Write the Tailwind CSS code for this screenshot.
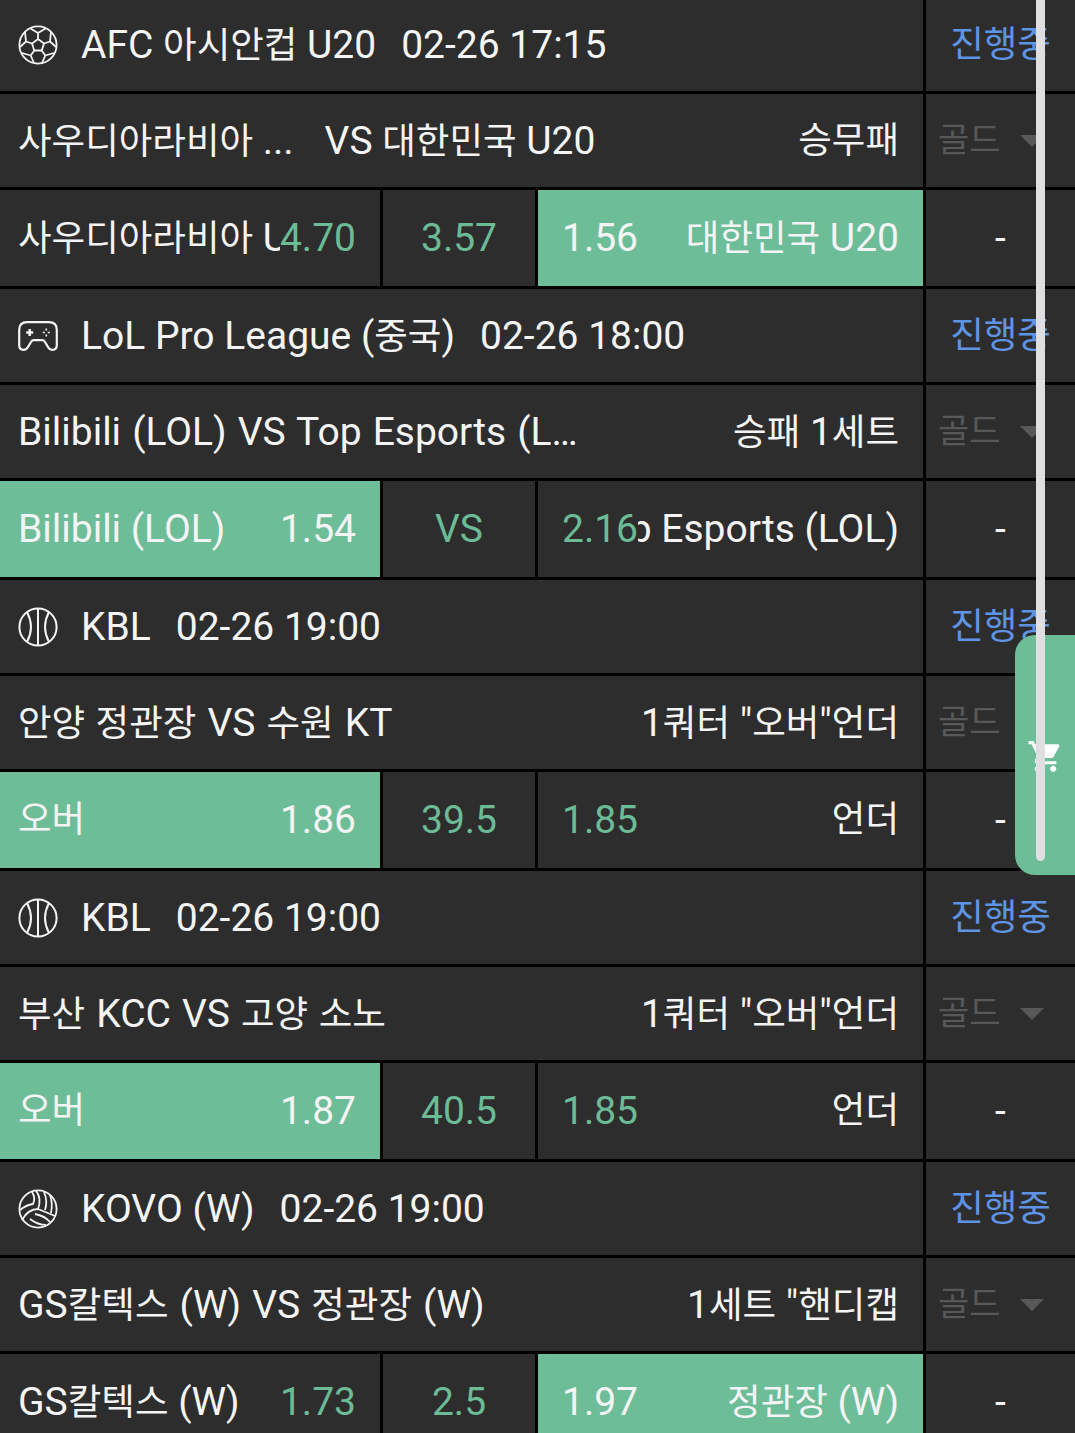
<!DOCTYPE html>
<html lang="ko">
<head>
    <meta charset="UTF-8">
    <meta name="viewport" content="width=device-width, initial-scale=1.0">
    <title>Bet list</title>
    <script src="https://cdn.jsdelivr.net/npm/@tailwindcss/browser@4"></script>
</head>
<body class="relative h-[1433px] overflow-hidden bg-[#2d2d2d] font-['Roboto','Noto_Sans_CJK_KR',sans-serif] text-[39px] text-[#f4f4f4] whitespace-nowrap">
    <div class="-mt-[2px]">

        <!-- AFC -->
        <div class="flex h-[96px] border-b-[3px] border-black">
            <div class="flex w-[926px] items-center border-r-[3px] border-black pl-[18px] pt-[1px]">
                <svg class="w-[40px] h-[40px] mr-[23px] shrink-0" viewBox="0 0 40 40" fill="none" stroke="#f4f4f4" stroke-width="1.8"><circle cx="20" cy="20" r="18.6"/><path d="M20 14l6 4.500-2.300 7h-7.400l-2.300-7zM20 14V8M26 18.500l6-2M23.700 25.500l3.600 5M16.300 25.500l-3.600 5M14 18.500l-6-2M20 8l-7.500-4.500M20 8l7.500-4.500M32 16.500l1-9.500M32 16.500l6 5.500M27.300 30.500l8.700-2.500M27.300 30.500L24 38M12.700 30.500L4 28M12.700 30.500L16 38M8 16.500L7 7M8 16.500L2 22"/></svg>
                <span>AFC <span class="text-[36.5px]">아시안컵</span> U20</span>
                <span class="ml-[25px]">02-26 17:15</span>
            </div>
            <div class="flex flex-1 items-center justify-center pt-[1px] text-[36.5px] text-[#5f93e3]">진행중</div>
        </div>
        <div class="flex h-[96px] border-b-[3px] border-black">
            <div class="flex w-[926px] items-center justify-between border-r-[3px] border-black pl-[18px] pr-[24px] pt-[1px]">
                <span><span class="text-[36.5px]">사우디아라비아</span> ...<span class="ml-[31px]">VS <span class="text-[36.5px]">대한민국</span> U20</span></span>
                <span class="text-[36.5px]">승무패</span>
            </div>
            <div class="flex flex-1 items-center pl-[12px] text-[34px] text-[#585858]">골드<span class="ml-[19px] border-x-[12px] border-t-[12px] border-x-transparent border-t-[#585858]"></span></div>
        </div>
        <div class="flex h-[99px] border-b-[3px] border-black">
            <div class="flex w-[926px] border-r-[3px] border-black">
                <div class="flex w-[383px] shrink-0 items-center border-r-[3px] border-black pl-[18px] pr-[24px]">
                    <div class="flex-1 min-w-0 overflow-hidden"><span class="text-[36.5px]">사우디아라비아</span> U20</div>
                    <span class="shrink-0 text-[#6cbb97]">4.70</span>
                </div>
                <div class="flex w-[155px] shrink-0 items-center justify-center border-r-[3px] border-black text-[#6cbb97]">3.57</div>
                <div class="flex flex-1 min-w-0 items-center bg-[#6cbd98] pl-[24px] pr-[24px]">
                    <span class="shrink-0">1.56</span>
                    <div class="flex flex-1 min-w-0 justify-end overflow-hidden"><span class="shrink-0"><span class="text-[36.5px]">대한민국</span> U20</span></div>
                </div>
            </div>
            <div class="flex flex-1 items-center justify-center">-</div>
        </div>

        <!-- LoL -->
        <div class="flex h-[96px] border-b-[3px] border-black">
            <div class="flex w-[926px] items-center border-r-[3px] border-black pl-[18px] pt-[1px]">
                <svg class="w-[40px] h-[30px] mr-[23px] shrink-0" viewBox="0 0 40 30" fill="none" stroke="#f4f4f4" stroke-width="2.2"><path d="M9 1.200H31Q38.800 1.200 38.800 9V24Q38.800 28.800 34.500 28.800Q31.500 28.800 30 26L27 21Q26 19.200 24 19.200H16Q14 19.200 13 21L10 26Q8.500 28.800 5.500 28.800Q1.200 28.800 1.200 24V9Q1.200 1.200 9 1.200Z"/><path stroke-width="2.500" d="M11.700 8v7M8.200 11.500h7"/><path stroke-width="1.600" d="M28.300 7.500v2M28.300 13.500v2M24.800 11.500h2M29.800 11.500h2"/></svg>
                <span>LoL Pro League (<span class="text-[36.5px]">중국</span>)</span>
                <span class="ml-[25px]">02-26 18:00</span>
            </div>
            <div class="flex flex-1 items-center justify-center pt-[1px] text-[36.5px] text-[#5f93e3]">진행중</div>
        </div>
        <div class="flex h-[96px] border-b-[3px] border-black">
            <div class="flex w-[926px] items-center justify-between border-r-[3px] border-black pl-[18px] pr-[24px] pt-[1px]">
                <span class="[word-spacing:1.4px]">Bilibili (LOL) VS Top Esports (L…</span>
                <span><span class="text-[36.5px]">승패</span> 1<span class="text-[36.5px]">세트</span></span>
            </div>
            <div class="flex flex-1 items-center pl-[12px] text-[34px] text-[#585858]">골드<span class="ml-[19px] border-x-[12px] border-t-[12px] border-x-transparent border-t-[#585858]"></span></div>
        </div>
        <div class="flex h-[99px] border-b-[3px] border-black">
            <div class="flex w-[926px] border-r-[3px] border-black">
                <div class="flex w-[383px] shrink-0 items-center border-r-[3px] border-black bg-[#6cbd98] pl-[18px] pr-[24px]">
                    <div class="flex-1 min-w-0 overflow-hidden">Bilibili (LOL)</div>
                    <span class="shrink-0">1.54</span>
                </div>
                <div class="flex w-[155px] shrink-0 items-center justify-center border-r-[3px] border-black text-[#6cbb97]">VS</div>
                <div class="flex flex-1 min-w-0 items-center pl-[24px] pr-[24px]">
                    <span class="shrink-0 text-[#6cbb97]">2.16</span>
                    <div class="flex flex-1 min-w-0 justify-end overflow-hidden"><span class="shrink-0">Top Esports (LOL)</span></div>
                </div>
            </div>
            <div class="flex flex-1 items-center justify-center">-</div>
        </div>

        <!-- KBL 1 -->
        <div class="flex h-[96px] border-b-[3px] border-black">
            <div class="flex w-[926px] items-center border-r-[3px] border-black pl-[18px] pt-[1px]">
                <svg class="w-[40px] h-[40px] mr-[23px] shrink-0" viewBox="0 0 40 40" fill="none" stroke="#f4f4f4" stroke-width="2"><circle cx="20" cy="20" r="18.600"/><path d="M20 1.500v37M9 5Q17 20 9 35M31 5Q23 20 31 35"/></svg>
                <span>KBL</span>
                <span class="ml-[25px]">02-26 19:00</span>
            </div>
            <div class="flex flex-1 items-center justify-center pt-[1px] text-[36.5px] text-[#5f93e3]">진행중</div>
        </div>
        <div class="flex h-[96px] border-b-[3px] border-black">
            <div class="flex w-[926px] items-center justify-between border-r-[3px] border-black pl-[18px] pr-[24px] pt-[1px]">
                <span class="[word-spacing:1.4px]"><span class="text-[36.5px]">안양 정관장</span> VS <span class="text-[36.5px]">수원</span> KT</span>
                <span>1<span class="text-[36.5px]">쿼터</span> "<span class="text-[36.5px]">오버</span>"<span class="text-[36.5px]">언더</span></span>
            </div>
            <div class="flex flex-1 items-center pl-[12px] text-[34px] text-[#585858]">골드<span class="ml-[19px] border-x-[12px] border-t-[12px] border-x-transparent border-t-[#585858]"></span></div>
        </div>
        <div class="flex h-[99px] border-b-[3px] border-black">
            <div class="flex w-[926px] border-r-[3px] border-black">
                <div class="flex w-[383px] shrink-0 items-center border-r-[3px] border-black bg-[#6cbd98] pl-[18px] pr-[24px]">
                    <div class="flex-1 min-w-0 overflow-hidden pt-[1px] text-[36.5px]">오버</div>
                    <span class="shrink-0">1.86</span>
                </div>
                <div class="flex w-[155px] shrink-0 items-center justify-center border-r-[3px] border-black text-[#6cbb97]">39.5</div>
                <div class="flex flex-1 min-w-0 items-center pl-[24px] pr-[24px]">
                    <span class="shrink-0 text-[#6cbb97]">1.85</span>
                    <div class="flex flex-1 min-w-0 justify-end overflow-hidden pt-[1px] text-[36.5px]">언더</div>
                </div>
            </div>
            <div class="flex flex-1 items-center justify-center">-</div>
        </div>

        <!-- KBL 2 -->
        <div class="flex h-[96px] border-b-[3px] border-black">
            <div class="flex w-[926px] items-center border-r-[3px] border-black pl-[18px] pt-[1px]">
                <svg class="w-[40px] h-[40px] mr-[23px] shrink-0" viewBox="0 0 40 40" fill="none" stroke="#f4f4f4" stroke-width="2"><circle cx="20" cy="20" r="18.600"/><path d="M20 1.500v37M9 5Q17 20 9 35M31 5Q23 20 31 35"/></svg>
                <span>KBL</span>
                <span class="ml-[25px]">02-26 19:00</span>
            </div>
            <div class="flex flex-1 items-center justify-center pt-[1px] text-[36.5px] text-[#5f93e3]">진행중</div>
        </div>
        <div class="flex h-[96px] border-b-[3px] border-black">
            <div class="flex w-[926px] items-center justify-between border-r-[3px] border-black pl-[18px] pr-[24px] pt-[1px]">
                <span class="[word-spacing:1.4px]"><span class="text-[36.5px]">부산</span> KCC VS <span class="text-[36.5px]">고양 소노</span></span>
                <span>1<span class="text-[36.5px]">쿼터</span> "<span class="text-[36.5px]">오버</span>"<span class="text-[36.5px]">언더</span></span>
            </div>
            <div class="flex flex-1 items-center pl-[12px] text-[34px] text-[#585858]">골드<span class="ml-[19px] border-x-[12px] border-t-[12px] border-x-transparent border-t-[#585858]"></span></div>
        </div>
        <div class="flex h-[99px] border-b-[3px] border-black">
            <div class="flex w-[926px] border-r-[3px] border-black">
                <div class="flex w-[383px] shrink-0 items-center border-r-[3px] border-black bg-[#6cbd98] pl-[18px] pr-[24px]">
                    <div class="flex-1 min-w-0 overflow-hidden pt-[1px] text-[36.5px]">오버</div>
                    <span class="shrink-0">1.87</span>
                </div>
                <div class="flex w-[155px] shrink-0 items-center justify-center border-r-[3px] border-black text-[#6cbb97]">40.5</div>
                <div class="flex flex-1 min-w-0 items-center pl-[24px] pr-[24px]">
                    <span class="shrink-0 text-[#6cbb97]">1.85</span>
                    <div class="flex flex-1 min-w-0 justify-end overflow-hidden pt-[1px] text-[36.5px]">언더</div>
                </div>
            </div>
            <div class="flex flex-1 items-center justify-center">-</div>
        </div>

        <!-- KOVO -->
        <div class="flex h-[96px] border-b-[3px] border-black">
            <div class="flex w-[926px] items-center border-r-[3px] border-black pl-[18px] pt-[1px]">
                <svg class="w-[40px] h-[40px] mr-[23px] shrink-0" viewBox="0 0 40 40" fill="none" stroke="#f4f4f4" stroke-width="1.800"><circle cx="20" cy="20" r="18.600"/><path d="M20 20Q24 10 18 1.500M20 20Q10 20 4 31M20 20Q30 24 37 27M14 3Q18 9 15 15Q8 16 2 21M17 25Q27 27 32 33M12 30Q20 36 28 36M26 3Q30 12 27 21M32 6Q35 14 33 24"/></svg>
                <span>KOVO (W)</span>
                <span class="ml-[25px]">02-26 19:00</span>
            </div>
            <div class="flex flex-1 items-center justify-center pt-[1px] text-[36.5px] text-[#5f93e3]">진행중</div>
        </div>
        <div class="flex h-[96px] border-b-[3px] border-black">
            <div class="flex w-[926px] items-center justify-between border-r-[3px] border-black pl-[18px] pr-[24px] pt-[1px]">
                <span class="[word-spacing:1.4px]">GS<span class="text-[36.5px]">칼텍스</span> (W) VS <span class="text-[36.5px]">정관장</span> (W)</span>
                <span>1<span class="text-[36.5px]">세트</span> "<span class="text-[36.5px]">핸디캡</span></span>
            </div>
            <div class="flex flex-1 items-center pl-[12px] text-[34px] text-[#585858]">골드<span class="ml-[19px] border-x-[12px] border-t-[12px] border-x-transparent border-t-[#585858]"></span></div>
        </div>
        <div class="flex h-[99px] border-b-[3px] border-black">
            <div class="flex w-[926px] border-r-[3px] border-black">
                <div class="flex w-[383px] shrink-0 items-center border-r-[3px] border-black pl-[18px] pr-[24px]">
                    <div class="flex-1 min-w-0 overflow-hidden">GS<span class="text-[36.5px]">칼텍스</span> (W)</div>
                    <span class="shrink-0 text-[#6cbb97]">1.73</span>
                </div>
                <div class="flex w-[155px] shrink-0 items-center justify-center border-r-[3px] border-black text-[#6cbb97]">2.5</div>
                <div class="flex flex-1 min-w-0 items-center bg-[#6cbd98] pl-[24px] pr-[24px]">
                    <span class="shrink-0">1.97</span>
                    <div class="flex flex-1 min-w-0 justify-end overflow-hidden"><span class="shrink-0"><span class="text-[36.5px]">정관장</span> (W)</span></div>
                </div>
            </div>
            <div class="flex flex-1 items-center justify-center">-</div>
        </div>
    </div>

    <!-- floating cart tab -->
    <div class="absolute left-[1015px] top-[635px] flex h-[240px] w-[60px] items-center rounded-l-[20px] bg-[#6cbd98] pl-[12px]">
        <svg class="h-[37px] w-[37px] mt-[2px]" viewBox="0 0 24 24" fill="#fff"><path d="M7 18c-1.100 0-1.990.9-1.990 2S5.900 22 7 22s2-.9 2-2-.9-2-2-2zM1 2v2h2l3.600 7.590-1.350 2.450c-.16.28-.25.61-.25.96 0 1.100.9 2 2 2h12v-2H7.420c-.14 0-.25-.11-.25-.25l.03-.12.9-1.630h7.450c.75 0 1.410-.41 1.750-1.030l3.580-6.490c.08-.14.12-.31.12-.48 0-.55-.45-1-1-1H5.210l-.94-2H1zm16 16c-1.100 0-1.990.9-1.990 2s.89 2 1.990 2 2-.9 2-2-.9-2-2-2z"/></svg>
    </div>
    <!-- scrollbar thumb -->
    <div class="absolute left-[1036px] top-0 h-[861px] w-[9px] rounded-b-full bg-[#dfdfe1]"></div>
</body>
</html>
